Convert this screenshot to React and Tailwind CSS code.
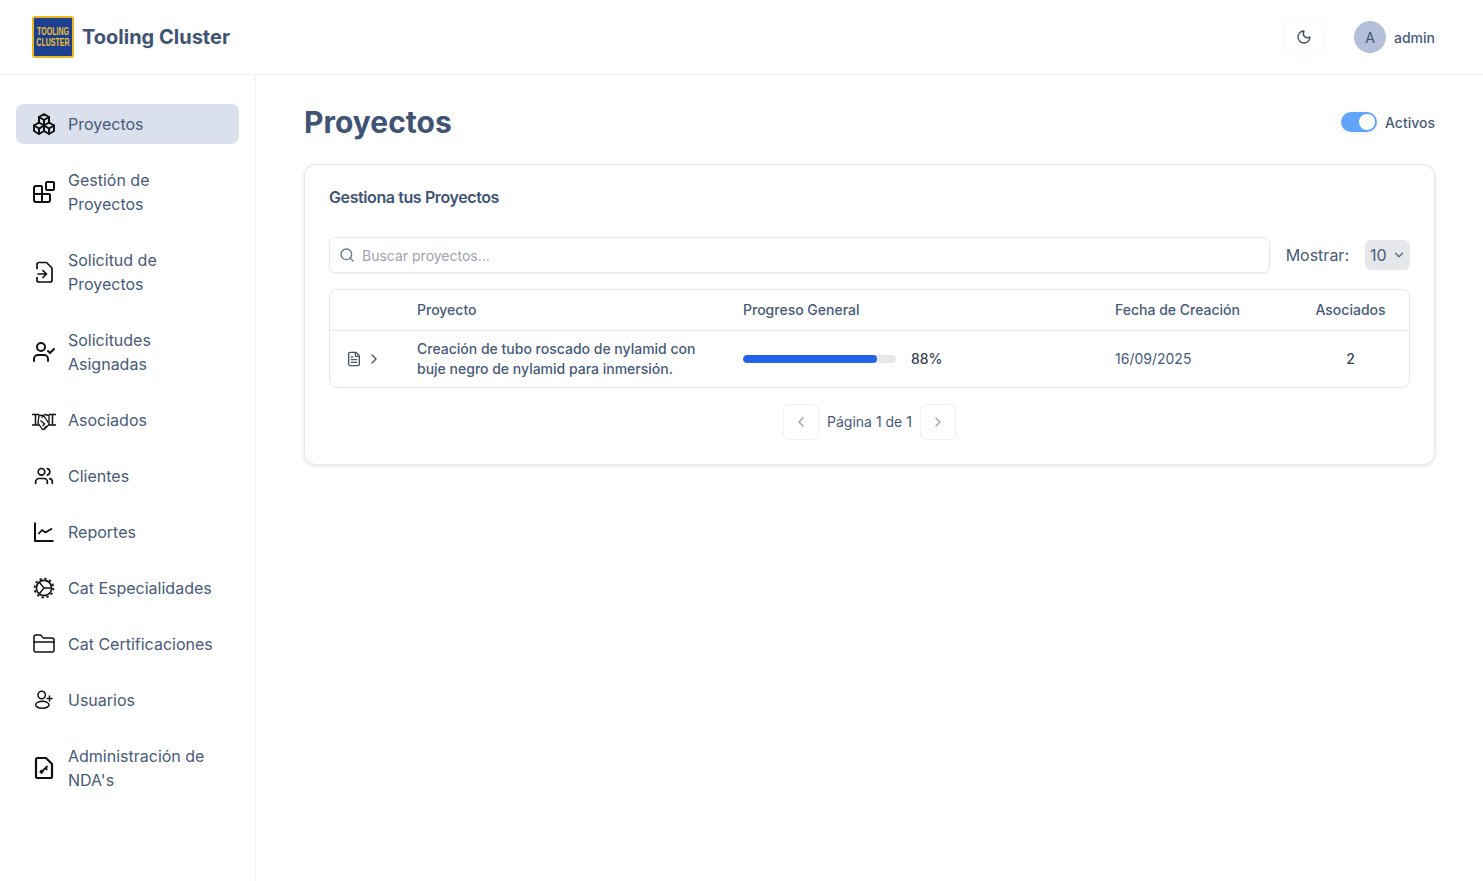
import { Blocks, ChevronDown, ChevronLeft, ChevronRight, FileText, FolderClosed, Moon, Search, UserCheck, Users } from 'lucide-react';
import { TbPackages } from 'react-icons/tb';

function GearIcon({ className }) {
  return (
    <svg viewBox="0 0 24 24" fill="none" stroke="currentColor" className={className}>
      <circle cx="12" cy="12" r="7.6" strokeWidth="1.6" />
      <circle cx="12" cy="12" r="9.4" strokeWidth="1.8" strokeDasharray="2.4 2.52" />
      <path d="M12 12 7.5 6.5M12 12l-4.5 5.5M12 12h7.5" strokeWidth="1.4" />
    </svg>
  );
}

function FileArrowIcon({ className }) {
  return (
    <svg viewBox="0 0 24 24" fill="none" stroke="currentColor" strokeWidth="1.7" strokeLinecap="round" strokeLinejoin="round" className={className}>
      <path d="M5 8.5V4.5A2 2 0 0 1 7 2.500h7.500L20 8v12a2 2 0 0 1-2 2H7a2 2 0 0 1-2-2v-2.500" />
      <path d="M6 14h8.500M11 10.500l3.500 3.500-3.500 3.500" />
    </svg>
  );
}

function HandshakeIcon({ className }) {
  return (
    <svg viewBox="0 0 24 24" fill="none" stroke="currentColor" strokeWidth="1.300" strokeLinejoin="round" className={className}>
      <path d="M0 6.500h7M0 17h7M3.500 6.500V17M17 6.500h7M17 17h7M20.500 6.500V17" strokeWidth="1.500" />
      <path d="M7 7.500h4l2-1 4 1v9l-5 5-2-.5-3-4.500-1-1z" />
      <path d="M9.500 9.500 12 8l4.500 7M8.500 12.500l4 3.500M10.500 18l2.500-2.500M12.500 20l2-2" />
    </svg>
  );
}

function ChartIcon({ className }) {
  return (
    <svg viewBox="0 0 24 24" fill="none" stroke="currentColor" strokeWidth="2" strokeLinejoin="round" className={className}>
      <path d="M3 2.500V21h18.500" />
      <path d="M6.500 14 10 10l3.500 2.500L20 8.500" strokeWidth="1.700" />
    </svg>
  );
}

function UserPlusIcon({ className }) {
  return (
    <svg viewBox="0 0 24 24" fill="none" stroke="currentColor" strokeWidth="1.500" className={className}>
      <circle cx="9.700" cy="7" r="3.700" />
      <ellipse cx="10.300" cy="16.800" rx="6.700" ry="3.500" />
      <path d="M17.500 7.500v6M14.500 10.500h6" />
    </svg>
  );
}

function FileKeyIcon({ className }) {
  return (
    <svg viewBox="0 0 24 24" fill="none" stroke="currentColor" strokeWidth="2.200" strokeLinejoin="round" className={className}>
      <path d="M5.500 2H14l6 6v12.500a1.500 1.500 0 0 1-1.500 1.500h-13A1.500 1.500 0 0 1 4 20.500v-17A1.500 1.500 0 0 1 5.500 2z" />
      <circle cx="9.500" cy="15.800" r="1.500" fill="currentColor" strokeWidth="1" />
      <path d="m10 15.300 5.500-5.300M13.500 12l1.800 1.800" strokeWidth="1.800" />
    </svg>
  );
}

const navItems = [
  { label: 'Proyectos', icon: TbPackages, active: true },
  { label: 'Gestión de Proyectos', icon: Blocks },
  { label: 'Solicitud de Proyectos', icon: FileArrowIcon },
  { label: 'Solicitudes Asignadas', icon: UserCheck },
  { label: 'Asociados', icon: HandshakeIcon },
  { label: 'Clientes', icon: Users, size: 'w-5 h-5 mx-0.5' },
  { label: 'Reportes', icon: ChartIcon },
  { label: 'Cat Especialidades', icon: GearIcon },
  { label: 'Cat Certificaciones', icon: FolderClosed, iconProps: { strokeWidth: 1.5 } },
  { label: 'Usuarios', icon: UserPlusIcon },
  { label: "Administración de NDA's", icon: FileKeyIcon },
];

function Header() {
  return (
    <header className="h-[75px] shrink-0 flex items-center justify-between pl-8 pr-12 border-b border-[#f1f2f4] bg-white">
      <div className="flex items-center gap-2">
        <div className="w-[42px] h-[42px] mb-[1px] flex items-center justify-center rounded-[3px] border-2 border-[#eab81e] bg-[#1d3f8f]">
          <span className="block text-center text-[11px] leading-[11px] font-bold text-[#eec22d] font-['Liberation_Sans',sans-serif] scale-x-[0.64] whitespace-nowrap">
            TOOLING
            <br />
            CLUSTER
          </span>
        </div>
        <span className="text-xl font-bold text-[#3f5374]">Tooling Cluster</span>
      </div>
      <div className="flex items-center gap-8">
        <button className="w-9 h-9 flex items-center justify-center rounded-lg bg-white shadow-[0_0_4px_rgba(0,0,0,0.05)] text-[#3f4a5f]">
          <Moon className="w-4 h-4" />
        </button>
        <div className="flex items-center gap-2">
          <div className="w-8 h-8 rounded-full bg-[#b4c0d9] flex items-center justify-center pt-px text-sm text-[#3f5374]">
            A
          </div>
          <span className="pt-px text-sm font-medium text-[#475a78]">admin</span>
        </div>
      </div>
    </header>
  );
}

function Sidebar() {
  return (
    <aside className="w-64 shrink-0 border-r border-[#f1f2f4] px-4 pt-[29px] flex flex-col gap-4">
      {navItems.map((item) => {
        const Icon = item.icon;
        return (
          <div
            key={item.label}
            className={`flex items-center gap-3 px-4 py-2 rounded-lg text-base text-[#475a78] ${item.active ? 'bg-[#dae0ec]' : ''}`}
          >
            <Icon className={`${item.size || 'w-6 h-6'} shrink-0 text-[#111]`} {...item.iconProps} />
            <span className="leading-6 max-w-[150px]">{item.label}</span>
          </div>
        );
      })}
    </aside>
  );
}

function ProjectsTable() {
  return (
    <div className="mt-4 rounded-lg border border-[#e5e7eb] overflow-hidden">
      <table className="w-full table-fixed text-sm text-[#475a78]">
        <thead>
          <tr className="h-10 border-b border-[#e5e7eb]">
            <th className="w-[75px]" />
            <th className="w-[326px] px-3 text-left font-medium">Proyecto</th>
            <th className="w-[372px] px-3 text-left font-medium">Progreso General</th>
            <th className="w-[189px] px-3 text-left font-medium">Fecha de Creación</th>
            <th className="text-center font-medium">Asociados</th>
          </tr>
        </thead>
        <tbody>
          <tr className="h-[57px]">
            <td>
              <div className="flex items-center justify-end gap-1 pr-[23px] text-[#475569]">
                <FileText className="w-4 h-4" />
                <ChevronRight className="w-4 h-4" />
              </div>
            </td>
            <td className="px-3 font-medium leading-5">Creación de tubo roscado de nylamid con buje negro de nylamid para inmersión.</td>
            <td className="px-3">
              <div className="flex items-center gap-[15px]">
                <div className="w-[153px] h-2 rounded-full bg-[#e5e7eb] overflow-hidden">
                  <div className="h-full w-[134px] rounded-full bg-[#2563eb]" />
                </div>
                <span className="text-[#374151] font-medium">88%</span>
              </div>
            </td>
            <td className="px-3">16/09/2025</td>
            <td className="text-center font-medium text-[#374151]">2</td>
          </tr>
        </tbody>
      </table>
    </div>
  );
}

export default function App() {
  return (
    <div className="h-screen flex flex-col bg-white font-['Inter',sans-serif] overflow-hidden">
      <Header />
      <div className="flex flex-1 min-h-0">
        <Sidebar />
        <main className="flex-1 px-12 pt-[29px]">
          <div className="flex items-center justify-between mb-6">
            <h1 className="text-3xl font-bold text-[#3f5374]">Proyectos</h1>
            <div className="flex items-center gap-2">
              <div className="w-9 h-5 rounded-full bg-[#60a5fa] flex items-center justify-end px-[2px] shadow-[0_2px_6px_rgba(0,0,0,0.06)]">
                <div className="w-4 h-4 rounded-full bg-white" />
              </div>
              <span className="pt-px text-sm font-medium text-[#475a78]">Activos</span>
            </div>
          </div>
          <section className="rounded-xl border border-[#e5e7eb] bg-white p-6 shadow-[0_1px_4px_rgba(0,0,0,0.12)]">
            <h2 className="text-base leading-4 font-semibold tracking-tight text-[#3f5374] mb-8">Gestiona tus Proyectos</h2>
            <div className="flex items-center gap-4">
              <div className="flex-1 h-9 flex items-center gap-[7px] px-[9px] rounded-md border border-[#e5e7eb] shadow-[0_1px_2px_rgba(0,0,0,0.05)]">
                <Search className="w-4 h-4 text-[#64748b]" />
                <span className="pt-px text-sm text-[#9ca3af]">Buscar proyectos...</span>
              </div>
              <span className="text-base text-[#475a78]">Mostrar:</span>
              <div className="w-[45px] h-[30px] flex items-center justify-between pl-[5px] pr-[4px] rounded-md bg-[#e5e7eb] text-base text-[#475a78]">
                10
                <ChevronDown className="w-[14px] h-[14px]" />
              </div>
            </div>
            <ProjectsTable />
            <div className="mt-4 flex items-center justify-center gap-2 text-sm text-[#475a78]">
              <button className="w-9 h-9 flex items-center justify-center rounded-md border border-[#eef0f3] text-[#94a3b8]">
                <ChevronLeft className="w-4 h-4" />
              </button>
              <span>Página 1 de 1</span>
              <button className="w-9 h-9 flex items-center justify-center rounded-md border border-[#eef0f3] text-[#94a3b8]">
                <ChevronRight className="w-4 h-4" />
              </button>
            </div>
          </section>
        </main>
      </div>
    </div>
  );
}
